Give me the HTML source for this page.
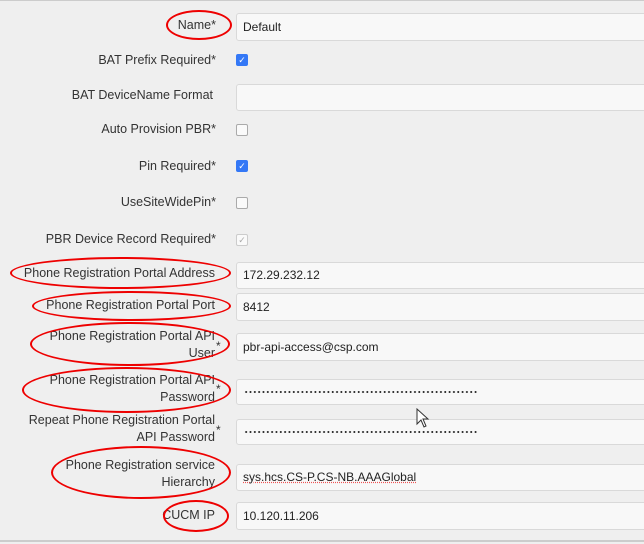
<!DOCTYPE html>
<html><head><style>
body{margin:0;width:644px;height:544px;background:#efefef;font-family:"Liberation Sans",sans-serif;font-size:12.5px;color:#333;position:relative;overflow:hidden}
.l{position:absolute;right:428px;text-align:right;line-height:17px;white-space:nowrap}
.s{position:absolute;left:216px;font-size:12px}
.i{position:absolute;left:236px;width:420px;background:#f8f8f8;border:1px solid #d9d9d9;border-radius:3px;box-sizing:border-box;padding-left:6px;font-size:12px;color:#222}
.cb{position:absolute;left:236px;width:10px;height:10px;border:1px solid #aaa;border-radius:2px;background:#fafafa}
.ck{background:#3478f6;border-color:#3478f6;color:#fff;font-size:9px;line-height:10px;text-align:center}
.e{position:absolute;border:2px solid #e00;border-radius:50%;box-sizing:border-box}
.d{position:absolute;left:7px;top:11px;width:234px;height:2px;background-image:radial-gradient(circle,#333 0.9px,transparent 1.1px);background-size:4.33px 2px}
</style></head><body>
<div style="position:absolute;left:0;right:0;top:0;height:1px;background:#ccc"></div>
<div style="position:absolute;left:0;right:0;top:540px;height:2px;background:#ccc"></div>

<div class="l" style="top:17px">Name*</div>
<div class="i" style="top:13px;height:28px;line-height:26px">Default</div>

<div class="l" style="top:52px">BAT Prefix Required*</div>
<div class="cb ck" style="top:54px">✓</div>
<div class="l" style="top:87px;right:431px">BAT DeviceName Format</div>
<div class="i" style="top:84px;height:27px"></div>
<div class="l" style="top:121px">Auto Provision PBR*</div>
<div class="cb" style="top:124px"></div>
<div class="l" style="top:158px">Pin Required*</div>
<div class="cb ck" style="top:160px">✓</div>
<div class="l" style="top:194px">UseSiteWidePin*</div>
<div class="cb" style="top:197px"></div>
<div class="l" style="top:231px">PBR Device Record Required*</div>
<div class="cb" style="top:234px;border-color:#ccc;color:#aaa;font-size:9px;line-height:10px;text-align:center">✓</div>

<div class="l" style="top:265px;right:429px">Phone Registration Portal Address</div>
<div class="i" style="top:262px;height:27px;line-height:25px">172.29.232.12</div>
<div class="l" style="top:297px;right:429px">Phone Registration Portal Port</div>
<div class="i" style="top:293px;height:28px;line-height:26px">8412</div>
<div class="l" style="top:328px;right:429px">Phone Registration Portal API<br>User</div><div class="s" style="top:339px">*</div>
<div class="i" style="top:333px;height:28px;line-height:26px">pbr-api-access@csp.com</div>
<div class="l" style="top:372px;right:429px">Phone Registration Portal API<br>Password</div><div class="s" style="top:382px">*</div>
<div class="i" style="top:379px;height:26px"><div class="d"></div></div>
<div class="l" style="top:412px;right:429px">Repeat Phone Registration Portal<br>API Password</div><div class="s" style="top:423px">*</div>
<div class="i" style="top:419px;height:26px"><div class="d"></div></div>
<div class="l" style="top:457px;right:429px">Phone Registration service<br>Hierarchy</div>
<div class="i" style="top:464px;height:27px;line-height:25px"><span style="text-decoration:underline dotted #e55">sys.hcs.CS-P.CS-NB.AAAGlobal</span></div>
<div class="l" style="top:507px;right:429px">CUCM IP</div>
<div class="i" style="top:502px;height:28px;line-height:26px">10.120.11.206</div>

<svg style="position:absolute;left:416px;top:408px" width="16" height="22" viewBox="0 0 16 22"><path d="M1 1 L1 16 L5 12 L8 19 L10 18 L7 11 L12 11 Z" fill="#fff" stroke="#333" stroke-width="1"/></svg>

<div class="e" style="left:166px;top:10px;width:66px;height:30px"></div>
<div class="e" style="left:10px;top:257px;width:221px;height:32px"></div>
<div class="e" style="left:32px;top:291px;width:199px;height:30px"></div>
<div class="e" style="left:30px;top:322px;width:200px;height:44px"></div>
<div class="e" style="left:22px;top:367px;width:209px;height:46px"></div>
<div class="e" style="left:51px;top:446px;width:180px;height:53px"></div>
<div class="e" style="left:163px;top:500px;width:66px;height:32px"></div>
</body></html>
